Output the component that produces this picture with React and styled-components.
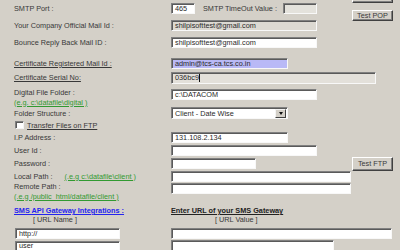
import styled, { createGlobalStyle } from "styled-components";

const GlobalStyle = createGlobalStyle`
  * {
    margin: 0;
    padding: 0;
    box-sizing: border-box;
  }

  body {
    font-family: 'Liberation Sans', Arial, sans-serif;
    font-size: 7.3px;
    color: #383838;
    background: #D4D0C8;
    overflow: hidden;
  }
`;

const Form = styled.div`
  display: flex;
  flex-direction: column;
  padding-left: 14px;
`;

const Row = styled.div`
  display: flex;
  align-items: ${(p) => p.$align || "center"};
  height: ${(p) => p.$h}px;
  margin-top: ${(p) => p.$mt || 0}px;
`;

const LabelCell = styled.div`
  flex: none;
  width: 157px;
  display: flex;
  flex-direction: column;
  line-height: ${(p) => (p.$lh ? `${p.$lh}px` : "normal")};
  text-decoration: ${(p) => (p.$underline ? "underline" : "none")};
  white-space: nowrap;
`;

const FieldCell = styled.div`
  flex: ${(p) => (p.$wide ? "1" : "none")};
  width: 181px;
  display: flex;
  align-items: center;
`;

const SideCell = styled.div`
  flex: none;
  width: 48px;
  display: flex;
  flex-direction: column;
  align-self: ${(p) => (p.$top ? "flex-start" : "center")};
  gap: 7px;
`;

const Note = styled.span`
  color: #319a31;
  text-decoration: underline;
`;

const Inline = styled.span`
  display: inline-flex;
  gap: 12px;
`;

const TextBox = styled.div`
  flex: none;
  width: ${(p) => p.$w}px;
  height: ${(p) => p.$h || 11}px;
  margin-left: ${(p) => p.$ml || 0}px;
  margin-top: ${(p) => p.$mt || 0}px;
  border: 1px solid;
  border-color: #808080 #f8f8f8 #f8f8f8 #808080;
  box-shadow: inset 1px 1px 0 #5a5a5a;
  background: ${(p) => p.$bg || "#ffffff"};
  padding-left: 3px;
  display: flex;
  align-items: center;
  color: #2a2a2a;
  white-space: nowrap;
  overflow: hidden;
`;

const Caret = styled.span`
  width: 1px;
  height: 8px;
  background: #111;
  margin-left: 0.5px;
`;

const InlineText = styled.span`
  flex: none;
  width: 88px;
  padding-left: 8px;
  white-space: nowrap;
`;

const Button = styled.button`
  width: 41px;
  height: ${(p) => p.$h || 12}px;
  margin-top: ${(p) => p.$mt || 0}px;
  border: 1px solid;
  border-color: #ffffff #404040 #404040 #ffffff;
  box-shadow: inset -1px -1px 0 #808080;
  background: #D4D0C8;
  font-family: inherit;
  font-size: 7.3px;
  color: #3a3a3a;
`;

const Select = styled(TextBox)`
  justify-content: space-between;
  padding-right: 1px;
`;

const DropButton = styled.span`
  width: 11px;
  height: 9px;
  border: 1px solid;
  border-color: #f4f4f4 #404040 #404040 #f4f4f4;
  background: #D4D0C8;
  display: flex;
  align-items: center;
  justify-content: center;

  &::after {
    content: "";
    border-left: 2.5px solid transparent;
    border-right: 2.5px solid transparent;
    border-top: 3px solid #111;
  }
`;

const CheckLine = styled.div`
  display: flex;
  align-items: center;
  text-decoration: underline;
`;

const CheckBox = styled.span`
  width: 8.5px;
  height: 8.5px;
  margin: 0 3.5px 0 1px;
  background: #fff;
  border: 1px solid;
  border-color: #808080 #f4f4f4 #f4f4f4 #808080;
  box-shadow: inset 1px 1px 0 #5a5a5a;
`;

const HeadCell = styled.div`
  flex: ${(p) => (p.$wide ? "1" : "none")};
  width: 157px;
  display: flex;
  flex-direction: column;
  line-height: 9px;
  white-space: nowrap;
`;

const Heading = styled.span`
  font-weight: bold;
  text-decoration: underline;
  color: ${(p) => p.$color || "#222"};
`;

const SubHeading = styled.span`
  padding-left: ${(p) => p.$indent}px;
`;

const LeftBoxCell = styled.div`
  flex: none;
  width: 157px;
  display: flex;
  align-items: center;
`;

export default function App() {
  return (
    <>
      <GlobalStyle />
      <Form>
        <Row $h={17}>
          <LabelCell>SMTP Port :</LabelCell>
          <FieldCell>
            <TextBox $w={24}>465</TextBox>
            <InlineText>SMTP TimeOut Value :</InlineText>
            <TextBox $w={34} $bg="#E4E2DC" />
          </FieldCell>
          <SideCell $top>
            <Button $mt={-9.5} aria-label="Test SMTP" />
            <Button $h={11.5}>Test POP</Button>
          </SideCell>
        </Row>
        <Row $h={17}>
          <LabelCell>Your Company Official Mail Id :</LabelCell>
          <FieldCell>
            <TextBox $w={146} $bg="#DCD9D2">shilpisofttest@gmail.com</TextBox>
          </FieldCell>
        </Row>
        <Row $h={17}>
          <LabelCell>Bounce Reply Back Mail ID :</LabelCell>
          <FieldCell>
            <TextBox $w={146}>shilpisofttest@gmail.com</TextBox>
          </FieldCell>
        </Row>
        <Row $h={14} $mt={5}>
          <LabelCell $underline>Certificate Registered Mail Id :</LabelCell>
          <FieldCell>
            <TextBox $w={117} $bg="#B9B9F6">admin@tcs-ca.tcs.co.in</TextBox>
          </FieldCell>
        </Row>
        <Row $h={15}>
          <LabelCell $underline>Certificate Serial No:</LabelCell>
          <FieldCell $wide>
            <TextBox $w={205} $h={12} $bg="#E3E0DA">
              036bc9
              <Caret />
            </TextBox>
          </FieldCell>
        </Row>
        <Row $h={19} $mt={3} $align="flex-start">
          <LabelCell $lh={9.5}>
            <span>Digital File Folder :</span>
            <Note>(e.g. c:\datafile\digital )</Note>
          </LabelCell>
          <FieldCell>
            <TextBox $w={146} $mt={1.3}>c:\DATACOM</TextBox>
          </FieldCell>
        </Row>
        <Row $h={12}>
          <LabelCell>Folder Structure :</LabelCell>
          <FieldCell>
            <Select $w={117} $h={12}>
              Client - Date Wise
              <DropButton />
            </Select>
          </FieldCell>
        </Row>
        <Row $h={12}>
          <LabelCell>
            <CheckLine>
              <CheckBox />
              Transfer Files on FTP
            </CheckLine>
          </LabelCell>
        </Row>
        <Row $h={13}>
          <LabelCell>I.P Address :</LabelCell>
          <FieldCell>
            <TextBox $w={117} $h={11.5}>131.108.2.134</TextBox>
          </FieldCell>
        </Row>
        <Row $h={13}>
          <LabelCell>User Id :</LabelCell>
          <FieldCell>
            <TextBox $w={146} />
          </FieldCell>
        </Row>
        <Row $h={13}>
          <LabelCell>Password :</LabelCell>
          <FieldCell>
            <TextBox $w={85} />
          </FieldCell>
          <SideCell>
            <Button $h={14}>Test FTP</Button>
          </SideCell>
        </Row>
        <Row $h={12}>
          <LabelCell>
            <Inline>
              <span>Local Path :</span>
              <Note>(.e.g c:\datafile\client )</Note>
            </Inline>
          </LabelCell>
          <FieldCell>
            <TextBox $w={180} />
          </FieldCell>
        </Row>
        <Row $h={19} $align="flex-start">
          <LabelCell $lh={9.5}>
            <span>Remote Path :</span>
            <Note>(.e.g /public_html/datafile/client )</Note>
          </LabelCell>
          <FieldCell>
            <TextBox $w={180} $mt={1.3} />
          </FieldCell>
        </Row>
        <Row $h={18} $mt={5} $align="flex-start">
          <HeadCell>
            <Heading $color="#2424ee">SMS API Gateway Integrations :</Heading>
            <SubHeading $indent={19}>[ URL Name ]</SubHeading>
          </HeadCell>
          <HeadCell $wide>
            <Heading>Enter URL of your SMS Gateway</Heading>
            <SubHeading $indent={44}>[ URL Value ]</SubHeading>
          </HeadCell>
        </Row>
        <Row $h={12.5} $mt={3}>
          <LeftBoxCell>
            <TextBox $w={105} $h={10.5} $ml={1}>http://</TextBox>
          </LeftBoxCell>
          <FieldCell $wide>
            <TextBox $w={221} $h={11.5} />
          </FieldCell>
        </Row>
        <Row $h={12.5}>
          <LeftBoxCell>
            <TextBox $w={105} $h={10.5} $ml={1}>user</TextBox>
          </LeftBoxCell>
          <FieldCell $wide>
            <TextBox $w={163} $h={11.5} />
          </FieldCell>
        </Row>
      </Form>
    </>
  );
}
